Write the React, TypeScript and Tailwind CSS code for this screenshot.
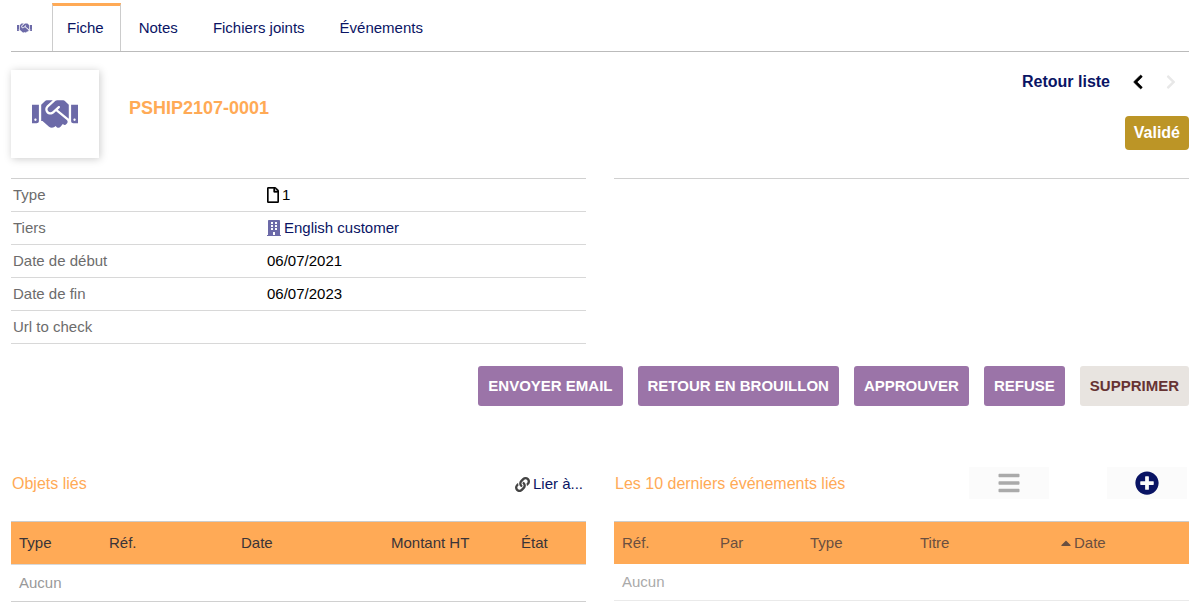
import React from 'react';
import {
    FaBars,
    FaBuilding,
    FaCaretUp,
    FaChevronLeft,
    FaChevronRight,
    FaHandshake,
    FaLink,
    FaPlusCircle,
    FaRegFile,
} from 'react-icons/fa';

interface Field {
    label: string;
    value?: React.ReactNode;
}

interface Column {
    label: string;
    width: string;
    sorted?: boolean;
}

interface ListTableProps {
    label: string;
    columns: Column[];
    faded?: boolean;
}

const FIELDS: Field[] = [
    {
        label: 'Type',
        value: (
            <span className="flex items-center gap-[3px]">
                <FaRegFile className="w-[12px] h-[16px] stroke-[10]" />1
            </span>
        ),
    },
    {
        label: 'Tiers',
        value: (
            <a href="#tiers" className="flex items-center gap-[3px] text-[#0a1464]">
                <FaBuilding className="w-[14px] h-[16px] text-[#6c6aa8]" />
                English customer
            </a>
        ),
    },
    { label: 'Date de début', value: '06/07/2021' },
    { label: 'Date de fin', value: '06/07/2023' },
    { label: 'Url to check' },
];

const ACTIONS = ['Envoyer email', 'Retour en brouillon', 'Approuver', 'Refuse'];

const OBJECT_COLUMNS: Column[] = [
    { label: 'Type', width: 'w-[90px]' },
    { label: 'Réf.', width: 'w-[132px]' },
    { label: 'Date', width: 'w-[150px]' },
    { label: 'Montant HT', width: 'w-[130px]' },
    { label: 'État', width: 'w-[73px]' },
];

const EVENT_COLUMNS: Column[] = [
    { label: 'Réf.', width: 'w-[98px]' },
    { label: 'Par', width: 'w-[90px]' },
    { label: 'Type', width: 'w-[110px]' },
    { label: 'Titre', width: 'w-[141px]' },
    { label: 'Date', width: 'w-[136px]', sorted: true },
];

const Tabs: React.FC = () => (
    <nav className="flex items-stretch h-[49px] mt-[3px] border-b border-[#bbb]">
        <div className="w-[41px] pl-[6px] pt-px flex items-center">
            <FaHandshake className="w-[15px] h-[12px] text-[#6c6aa8]" />
        </div>
        <a
            href="#fiche"
            className="flex items-center pl-[14px] pr-4 pb-[2px] border-x border-x-[#ccc] border-t-[3px] border-t-[#ffaa56] text-[#0a1464]"
        >
            Fiche
        </a>
        <div className="flex items-center gap-[35px] pl-[18px] pt-px text-[#0a1464]">
            <a href="#notes">Notes</a>
            <a href="#fichiers">Fichiers joints</a>
            <a href="#evenements">Événements</a>
        </div>
    </nav>
);

const Banner: React.FC = () => (
    <header className="flex items-start pt-[18px] pb-5">
        <div className="size-[88px] flex items-center justify-center bg-white shadow-[1px_1px_8px_#ccc]">
            <FaHandshake className="w-[46px] h-[38px] text-[#6c6aa8]" />
        </div>
        <h1 className="ml-[30px] mt-[26px] text-lg leading-6 font-bold text-[#ffaa56]">PSHIP2107-0001</h1>
        <div className="ml-auto flex flex-col items-end gap-[22px]">
            <div className="flex items-center h-6 pr-[10px] text-base font-bold">
                <a href="#liste" className="text-[#0a1464]">Retour liste</a>
                <a href="#precedent" aria-label="Précédent" className="ml-5">
                    <FaChevronLeft className="size-[16px] stroke-[20]" />
                </a>
                <FaChevronRight className="size-[16px] ml-[17px] text-[#e8e8e8]" />
            </div>
            <span className="h-[34px] px-[9px] flex items-center rounded-[4px] bg-[#bc9526] text-base font-bold text-white">
                Validé
            </span>
        </div>
    </header>
);

const ListTable: React.FC<ListTableProps> = ({ label, columns, faded }) => (
    <table aria-label={label} className="w-full table-fixed border-collapse">
        <thead>
            <tr
                className={`bg-[#ffaa56] border-t border-t-[#ccc] ${
                    faded ? 'h-[42px] text-[#6a4f40]' : 'h-[43px] border-b border-b-[#d8d8d8] text-[#3a3438]'
                }`}
            >
                {columns.map((col) => (
                    <th key={col.label} scope="col" className={`px-2 text-left font-normal whitespace-nowrap ${col.width}`}>
                        {col.sorted ? (
                            <span className="flex items-center gap-[3px]">
                                <FaCaretUp className="w-[10px] h-[16px]" />
                                {col.label}
                            </span>
                        ) : (
                            col.label
                        )}
                    </th>
                ))}
            </tr>
        </thead>
        <tbody>
            <tr className={`h-[37px] border-b ${faded ? 'border-[#eaeaea] text-[#aaa]' : 'border-[#d0d0d0] text-[#999]'}`}>
                <td colSpan={columns.length} className="px-2">Aucun</td>
            </tr>
        </tbody>
    </table>
);

const App: React.FC = () => {
    return (
        <div className="pl-[11px] pr-[13px] flow-root bg-white text-black text-[15px] leading-5 font-['Liberation_Sans',Arial,sans-serif]">
            <Tabs />
            <Banner />

            {/* Record fields */}
            <div className="grid grid-cols-2 gap-7">
                <table className="w-full border-collapse border-t border-[#d0d0d0]">
                    <tbody>
                        {FIELDS.map((field) => (
                            <tr key={field.label} className="h-[33px] border-b border-[#d8d8d8]">
                                <th scope="row" className="w-[44%] pl-[2px] text-left font-normal text-[#6c6c6c]">
                                    {field.label}
                                </th>
                                <td className="pl-[3px]">{field.value}</td>
                            </tr>
                        ))}
                    </tbody>
                </table>
                <div className="border-t border-[#d0d0d0]"></div>
            </div>

            {/* Actions */}
            <div className="mt-[22px] flex justify-end gap-[15px] font-bold">
                {ACTIONS.map((action) => (
                    <button key={action} type="button" className="h-10 px-[10px] rounded-[3px] bg-[#9b74a8] text-white uppercase">
                        {action}
                    </button>
                ))}
                <button type="button" className="h-10 px-[10px] rounded-[3px] bg-[#e8e4e0] text-[#633] uppercase">
                    Supprimer
                </button>
            </div>

            {/* Linked objects and latest events */}
            <div className="mt-[60px] grid grid-cols-2 gap-7">
                <section>
                    <div className="flex items-center justify-between h-[34px] mb-[21px] pt-[2px] pl-px pr-[3px]">
                        <h2 className="text-base text-[#ffaa56]">Objets liés</h2>
                        <a href="#lier" className="flex items-center gap-[3px] text-[#0a1464]">
                            <FaLink className="size-[15px] text-[#444]" />
                            Lier à...
                        </a>
                    </div>
                    <ListTable label="Objets liés" columns={OBJECT_COLUMNS} />
                </section>
                <section>
                    <div className="flex items-center h-[34px] mb-[21px] pl-px pr-[2px]">
                        <h2 className="mr-auto pt-[2px] text-base text-[#ffaa56]">Les 10 derniers événements liés</h2>
                        <button type="button" aria-label="Liste" className="w-20 h-8 flex items-center justify-center bg-[#fbfbfb] text-[#aaa]">
                            <FaBars className="w-[22px] h-[24px]" />
                        </button>
                        <button type="button" aria-label="Ajouter" className="w-20 h-8 ml-[58px] flex items-center justify-center bg-[#fbfbfb] text-[#0a1464]">
                            <FaPlusCircle className="size-6" />
                        </button>
                    </div>
                    <ListTable label="Les 10 derniers événements liés" columns={EVENT_COLUMNS} faded />
                </section>
            </div>
        </div>
    );
};

export default App;
